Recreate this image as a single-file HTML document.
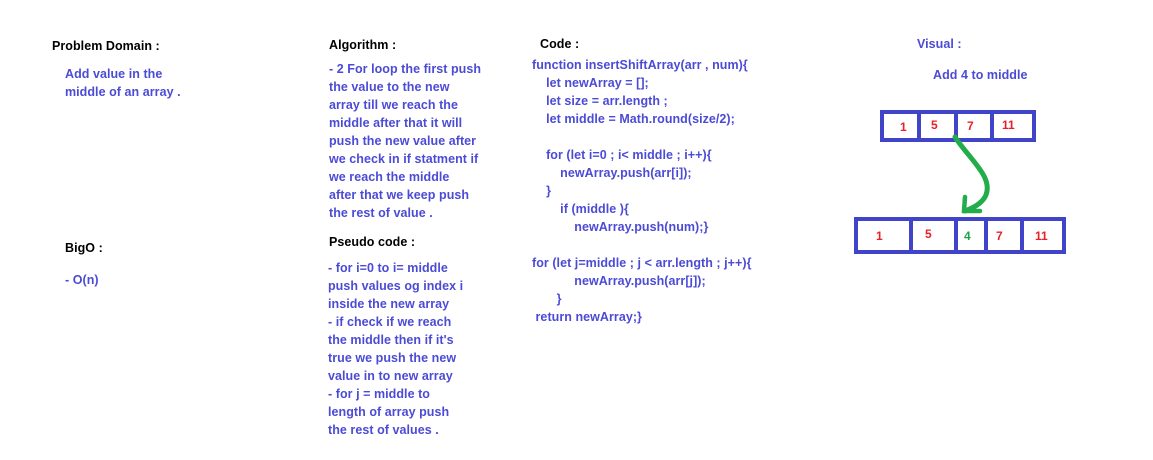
<!DOCTYPE html>
<html><head><meta charset="utf-8"><style>
body{margin:0;width:1153px;height:460px;background:#fff;position:relative;overflow:hidden;font-family:"Liberation Sans",sans-serif;font-weight:bold;font-size:12.5px;letter-spacing:0.05px}
.t{position:absolute;line-height:18px;white-space:pre;color:#4b4bd6}
.h{color:#000}
.box{position:absolute;border:4px solid #3f44c8;box-sizing:border-box}
.d{position:absolute;top:0;bottom:0;width:4px;background:#3f44c8}
.n{position:absolute;color:#e8202a;font-size:12px;line-height:18px}
</style></head><body>
<div class="t h" style="left:52px;top:37px">Problem Domain :</div>
<div class="t" style="left:65px;top:65px">Add value in the
middle of an array .</div>
<div class="t h" style="left:65px;top:239px">BigO :</div>
<div class="t" style="left:65px;top:271px">- O(n)</div>
<div class="t h" style="left:329px;top:36px">Algorithm :</div>
<div class="t" style="left:329px;top:60px">- 2 For loop the first push
the value to the new
array till we reach the
middle after that it will
push the new value after
we check in if statment if
we reach the middle
after that we keep push
the rest of value .</div>
<div class="t h" style="left:329px;top:233px">Pseudo code :</div>
<div class="t" style="left:328px;top:259px">- for i=0 to i= middle
push values og index i
inside the new array
- if check if we reach
the middle then if it's
true we push the new
value in to new array
- for j = middle to
length of array push
the rest of values .</div>
<div class="t h" style="left:540px;top:35px">Code :</div>
<div class="t" style="left:532px;top:56px">function insertShiftArray(arr , num){
    let newArray = [];
    let size = arr.length ;
    let middle = Math.round(size/2);

    for (let i=0 ; i&lt; middle ; i++){
        newArray.push(arr[i]);
    }
        if (middle ){
            newArray.push(num);}

for (let j=middle ; j &lt; arr.length ; j++){
            newArray.push(arr[j]);
       }
 return newArray;}</div>
<div class="t" style="left:917px;top:35px">Visual :</div>
<div class="t" style="left:933px;top:66px">Add 4 to middle</div>

<div class="box" style="left:880px;top:110px;width:156px;height:32px">
 <div class="d" style="left:33px;bottom:-4px"></div><div class="d" style="left:70px"></div><div class="d" style="left:106px"></div>
 <div class="n" style="left:16px;top:4px">1</div><div class="n" style="left:47px;top:2px">5</div><div class="n" style="left:83px;top:3px">7</div><div class="n" style="left:118px;top:2px">11</div>
</div>
<div class="box" style="left:854px;top:217px;width:212px;height:37px">
 <div class="d" style="left:51px;bottom:-4px"></div><div class="d" style="left:96px"></div><div class="d" style="left:126px"></div><div class="d" style="left:162px;bottom:-4px"></div>
 <div class="n" style="left:18px;top:6px">1</div><div class="n" style="left:67px;top:4px">5</div><div class="n" style="left:106px;top:6px;color:#22a04a">4</div><div class="n" style="left:138px;top:6px">7</div><div class="n" style="left:177px;top:6px">11</div>
</div>
<svg style="position:absolute;left:0;top:0" width="1153" height="460">
<path d="M955 137 C970 160 995 178 985 197 C980 205 972 208 965 211" stroke="#22ac4a" stroke-width="5" fill="none" stroke-linecap="round"/>
<path d="M965 197 L964 211 L980 211" stroke="#22ac4a" stroke-width="4.5" fill="none" stroke-linecap="round"/>
</svg>
</body></html>
